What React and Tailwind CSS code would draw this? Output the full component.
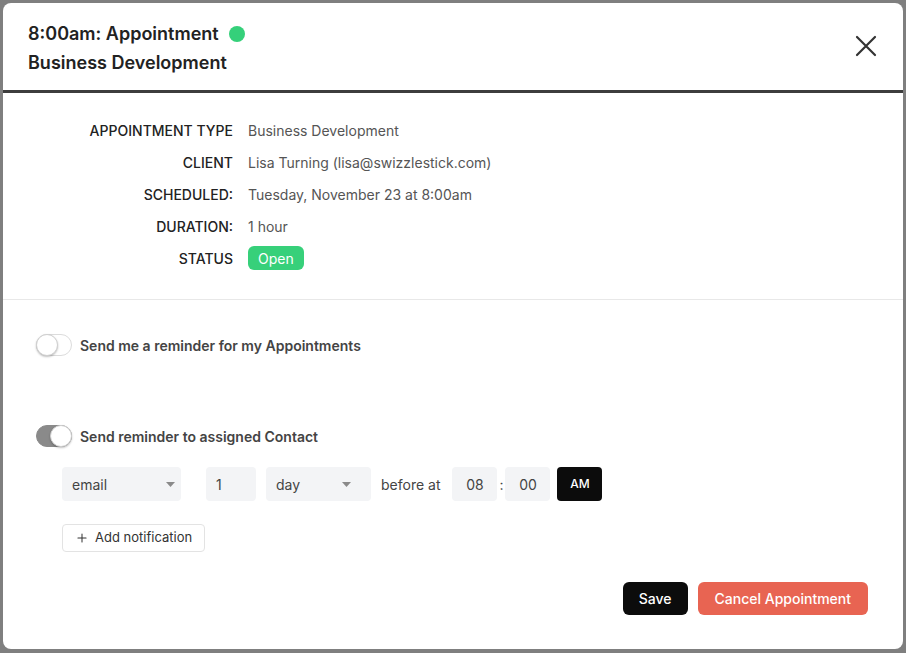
// App.jsx
import { Plus } from 'lucide-react';

const details = [
    { label: 'APPOINTMENT TYPE', value: 'Business Development' },
    { label: 'CLIENT', value: 'Lisa Turning (lisa@swizzlestick.com)' },
    { label: 'SCHEDULED:', value: 'Tuesday, November 23 at 8:00am' },
    { label: 'DURATION:', value: '1 hour' },
];

const Toggle = ({ on }) => (
    <span
        className={`relative inline-flex h-[22px] w-[36px] shrink-0 rounded-full border ${
            on ? 'bg-[#8a8a8a] border-[#8a8a8a]' : 'bg-white border-[#dcdcdc]'
        }`}
    >
        <span
            className={`absolute top-[-1px] h-[22px] w-[22px] rounded-full bg-white border border-[#d0d0d0] shadow-[0_1px_2px_rgba(0,0,0,0.25)] ${
                on ? 'right-[-1px]' : 'left-[-1px]'
            }`}
        />
    </span>
);

const Caret = () => (
    <svg width="9" height="5" viewBox="0 0 9 5" className="text-[#8a8a8a]">
        <path d="M0 0h9L4.5 5z" fill="currentColor" />
    </svg>
);

const App = () => {
    return (
        <div className="min-h-screen bg-[#7f7f7f] p-[3px] font-['Inter','Noto_Sans',sans-serif]">
            <div className="h-[646px] w-[900px] rounded-lg bg-white flex flex-col">
                {/* Header */}
                <div className="relative px-[25px] pt-[16px] pb-[13px] border-b-[3px] border-[#3d3d3d]">
                    <h1 className="flex items-center gap-[10px] text-[18px] leading-[29px] font-semibold text-[#222]">
                        8:00am: Appointment
                        <span className="h-[16px] w-[16px] rounded-full bg-[#35d07a]" />
                    </h1>
                    <h2 className="text-[18px] leading-[29px] font-semibold text-[#222]">Business Development</h2>
                    <button className="absolute right-[26px] top-[32px] text-[#333]">
                        <svg width="22" height="22" viewBox="0 0 22 22" fill="none" stroke="currentColor" strokeWidth="2.2" strokeLinecap="round">
                            <path d="M2 2L20 20M20 2L2 20" />
                        </svg>
                    </button>
                </div>

                {/* Details */}
                <div className="pt-[21px] pb-[25px] border-b border-[#e8e8e8]">
                    {details.map((row) => (
                        <div key={row.label} className="flex items-center h-[32px] text-[14px]">
                            <span className="w-[230px] text-right font-medium text-[#222]">{row.label}</span>
                            <span className="ml-[15px] text-[#555]">{row.value}</span>
                        </div>
                    ))}
                    <div className="flex items-center h-[32px] text-[14px]">
                        <span className="w-[230px] text-right font-medium text-[#222]">STATUS</span>
                        <span className="ml-[15px] h-[24px] px-[10px] flex items-center rounded-md bg-[#37d07a] text-white">Open</span>
                    </div>
                </div>

                {/* Reminders */}
                <div className="pl-[33px] pt-[34px]">
                    <label className="flex items-center gap-[8px] text-[14px] font-semibold text-[#444]">
                        <Toggle />
                        Send me a reminder for my Appointments
                    </label>

                    <label className="mt-[69px] flex items-center gap-[8px] text-[14px] font-semibold text-[#444]">
                        <Toggle on />
                        Send reminder to assigned Contact
                    </label>

                    <div className="mt-[20px] ml-[26px] flex items-center text-[14px] text-[#444]">
                        <div className="h-[34px] w-[119px] rounded bg-[#f3f4f6] flex items-center justify-between pl-[10px] pr-[6px] mr-[25px]">
                            <span>email</span>
                            <Caret />
                        </div>
                        <div className="h-[34px] w-[50px] rounded bg-[#f3f4f6] flex items-center pl-[10px] mr-[10px]">1</div>
                        <div className="h-[34px] w-[105px] rounded bg-[#f3f4f6] flex items-center justify-between pl-[10px] pr-[20px] mr-[10px]">
                            <span>day</span>
                            <Caret />
                        </div>
                        <span className="mr-[12px]">before at</span>
                        <div className="h-[34px] w-[45px] rounded bg-[#f3f4f6] flex items-center justify-center">08</div>
                        <span className="w-[8px] text-center">:</span>
                        <div className="h-[34px] w-[45px] rounded bg-[#f3f4f6] flex items-center justify-center mr-[7px]">00</div>
                        <div className="h-[34px] w-[45px] rounded bg-[#0c0c0c] text-white text-[12px] font-medium flex items-center justify-center">AM</div>
                    </div>

                    <button className="mt-[23px] ml-[26px] h-[28px] px-[12px] flex items-center gap-[6px] rounded border border-[#e3e3e3] text-[13px] text-[#333]">
                        <Plus size={14} strokeWidth={1.75} />
                        Add notification
                    </button>
                </div>

                {/* Footer */}
                <div className="mt-[30px] pr-[35px] flex justify-end gap-[10px]">
                    <button className="h-[33px] px-[16px] rounded-md bg-[#0c0c0c] text-white text-[14px] font-medium">Save</button>
                    <button className="h-[33px] px-[17px] rounded-md bg-[#e86452] text-white text-[14px] font-medium">Cancel Appointment</button>
                </div>
            </div>
        </div>
    );
};

export default App;
